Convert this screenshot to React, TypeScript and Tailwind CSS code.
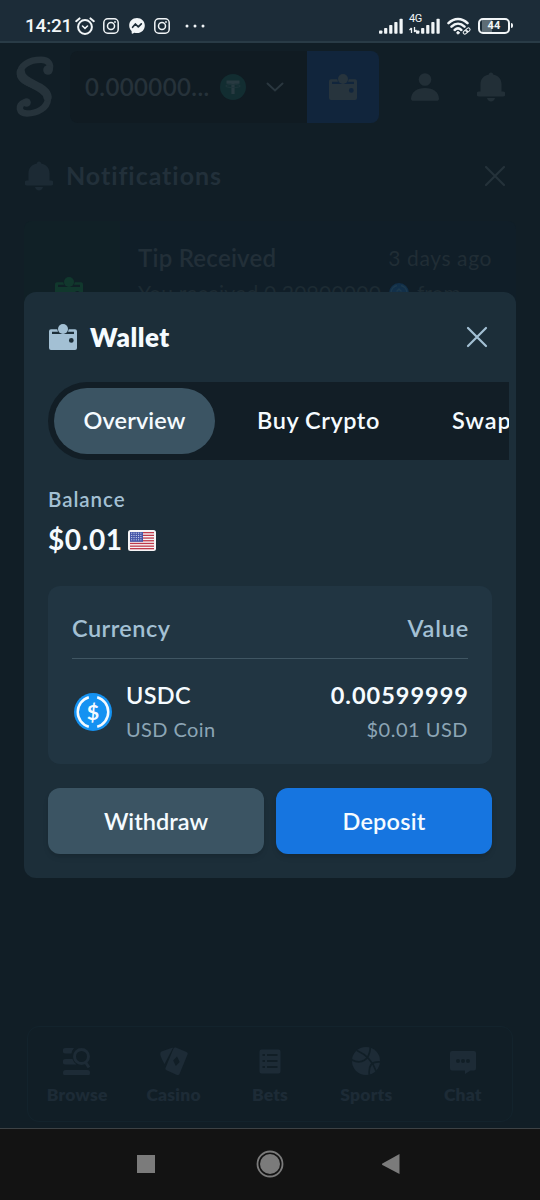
import type { ReactNode } from 'react';

interface IconProps {
  className?: string;
}

function WalletIcon({ className = '' }: IconProps) {
  return (
    <svg viewBox="0 0 28 26" className={className} fill="currentColor" aria-hidden="true">
      <circle cx="14" cy="5" r="5" />
      <path
        fillRule="evenodd"
        d="M2 5.3h6.200l.8 2.400H3V10h22V7.700h-6l.8-2.400H26a2 2 0 0 1 2 2V24a2 2 0 0 1-2 2H2a2 2 0 0 1-2-2V7.300a2 2 0 0 1 2-2zM22.300 14a2.400 2.400 0 1 0 0 4.800a2.400 2.400 0 0 0 0-4.800z"
      />
    </svg>
  );
}

function BellIcon({ className = '' }: IconProps) {
  return (
    <svg viewBox="0 0 28 30" className={className} fill="currentColor" aria-hidden="true">
      <path d="M14 .5c1.300 0 2 .8 2.100 2C21.200 3.400 24.500 7 24.500 12v7.500h1.500a2.300 2.300 0 0 1 0 5H2a2.300 2.300 0 0 1 0-5h1.500V12c0-5 3.300-8.600 8.400-9.500.1-1.200.8-2 2.100-2z" />
      <path d="M10 26h8c-.5 2.200-2 3.500-4 3.500S10.500 28.200 10 26z" />
    </svg>
  );
}

function UserIcon({ className = '' }: IconProps) {
  return (
    <svg viewBox="0 0 28 28" className={className} fill="currentColor" aria-hidden="true">
      <circle cx="14" cy="6.500" r="6.300" />
      <path d="M0 25.500C.5 19 6 15 14 15s13.500 4 14 10.500c0 1.500-1 2.300-2.300 2.300H2.300C1 27.800 0 27 0 25.500z" />
    </svg>
  );
}

function CloseIcon({ className = '' }: IconProps) {
  return (
    <svg viewBox="0 0 22 22" className={className} fill="none" stroke="currentColor" strokeWidth="2.200" strokeLinecap="round" aria-hidden="true">
      <path d="M2 2l18 18M20 2L2 20" />
    </svg>
  );
}

function BrandMark() {
  return (
    <svg viewBox="0 0 40 62" className="h-[62px] w-10 text-[#26333b]" fill="none" stroke="currentColor" strokeLinecap="round" strokeLinejoin="round" aria-hidden="true">
      <path strokeWidth="6.500" d="M34 14.500C37 8 33 3.800 26 3.800C14 3.800 5 9.500 5 18C5 29.500 34 29 33 43C32.300 52 22 57.500 12 57.500C3.500 57.500 2.500 49 9 46.500" />
      <circle cx="33" cy="14" r="4.800" fill="currentColor" stroke="none" />
      <circle cx="11.500" cy="46.500" r="4.300" fill="currentColor" stroke="none" />
      <path strokeWidth="8.500" d="M5.800 16C5.500 28 31.500 29 32.500 41" />
    </svg>
  );
}

function InstagramIcon() {
  return (
    <svg viewBox="0 0 16 16" className="size-4" fill="none" stroke="currentColor" strokeWidth="1.500" aria-hidden="true">
      <rect x=".8" y=".8" width="14.400" height="14.400" rx="4" />
      <circle cx="8" cy="8" r="3.500" />
      <circle cx="12" cy="4" r=".9" fill="currentColor" stroke="none" />
    </svg>
  );
}

function SignalBars({ className = '' }: IconProps) {
  return (
    <svg viewBox="0 0 24 16" className={className} fill="currentColor" aria-hidden="true">
      <rect x="0" y="12.500" width="3.400" height="3.200" rx=".8" />
      <rect x="5.100" y="10" width="3.200" height="5.700" rx=".8" />
      <rect x="10.200" y="7" width="3.200" height="8.700" rx=".8" />
      <rect x="15.300" y="4" width="3.200" height="11.700" rx=".8" />
      <rect x="20.500" y=".7" width="3.200" height="15" rx=".8" />
    </svg>
  );
}

function StatusBar() {
  return (
    <div className="flex h-[43px] shrink-0 items-end justify-between border-b-2 border-[#293b46] bg-[#1c2c38] text-[#f1f5f7]">
      <div className="flex h-[31px] items-center pl-[25px]">
        <span className="w-[50px] whitespace-nowrap font-['Roboto'] text-[19px] font-medium leading-6 tracking-[-0.2px]">14:21</span>
        <svg viewBox="0 0 20 18" className="h-[18px] w-5" fill="none" stroke="currentColor" strokeWidth="2" strokeLinecap="round" aria-hidden="true">
          <circle cx="10" cy="10" r="6.900" />
          <path d="M7.500 9l2.500 2.300L12.500 9" strokeWidth="1.600" />
          <path d="M1.200 4.200L4.500 1.400M18.800 4.200L15.500 1.400" />
        </svg>
        <div className="ml-2">
          <InstagramIcon />
        </div>
        <svg viewBox="0 0 16 16" className="ml-2.5 size-4" aria-hidden="true">
          <path fill="currentColor" d="M8 0C3.500 0 .2 3.200.2 7.500c0 2.300.9 4.200 2.400 5.500l.1 2.300c0 .4.400.6.700.4l2-.9c.8.2 1.700.3 2.600.3 4.500 0 7.800-3.300 7.800-7.600S12.500 0 8 0z" />
          <path fill="none" stroke="#1c2c38" strokeWidth="1.700" strokeLinecap="round" strokeLinejoin="round" d="M3.600 9.300L6.400 6l2.900 2.800 3-2.900" />
        </svg>
        <div className="ml-[9px]">
          <InstagramIcon />
        </div>
        <svg viewBox="0 0 20 4" className="ml-[15px] h-1 w-5" fill="currentColor" aria-hidden="true">
          <circle cx="2" cy="2" r="1.500" />
          <circle cx="10" cy="2" r="1.500" />
          <circle cx="18" cy="2" r="1.500" />
        </svg>
      </div>
      <div className="flex h-[31px] items-center pr-[30px]">
        <SignalBars className="h-4 w-6" />
        <div className="relative ml-1.5 h-4 w-[31px]">
          <span className="absolute -top-1.5 left-0 font-['Roboto'] text-[11px] leading-[13px] tracking-[-0.5px]">4G</span>
          <SignalBars className="absolute right-0 top-0 h-4 w-6" />
          <svg viewBox="0 0 8 6" className="absolute left-0 top-[9px] h-1.5 w-2" stroke="currentColor" fill="none" strokeWidth="1.300" aria-hidden="true">
            <path d="M2.500 6V1M.5 3l2-2M5.500 0v5M7.500 3l-2 2" />
          </svg>
        </div>
        <svg viewBox="0 0 24 18" className="ml-[7px] h-[18px] w-6" fill="none" stroke="currentColor" strokeLinecap="round" aria-hidden="true">
          <path strokeWidth="2.500" d="M1.500 6.200C7 .6 15 .6 20.500 6.200M4.500 9.700c4-3.900 9-3.900 13 0M7.700 13c2-1.900 4.600-1.900 6.600 0" />
          <circle cx="11" cy="15.800" r="1.200" fill="currentColor" />
          <g strokeWidth="1" transform="rotate(-40 19.500 14)">
            <rect x="15.700" y="12.500" width="4.500" height="3.200" rx="1.600" />
            <rect x="19" y="12.500" width="4.500" height="3.200" rx="1.600" />
          </g>
        </svg>
        <div className="ml-[7px] flex h-4 w-8 items-center justify-center rounded-[5px] border-2 border-current bg-[linear-gradient(90deg,transparent_2px,#5d6c75_2px,#5d6c75_12px,transparent_12px)]">
          <span className="font-['Roboto'] text-[11px] font-bold leading-3 tracking-[0.3px]">44</span>
        </div>
        <div className="-mr-[3px] ml-px h-[5px] w-0.5 rounded-r bg-current" />
      </div>
    </div>
  );
}

function SiteHeader() {
  return (
    <header className="flex h-[87px] shrink-0 items-center pl-[15px]">
      <BrandMark />
      <div className="ml-[15px] flex h-[72px] items-center rounded-l-lg bg-[#101b22] pl-[15px]">
        <span className="w-[135px] whitespace-nowrap text-[24px] font-semibold tracking-[0.4px] text-[#26323a]">0.000000...</span>
        <svg viewBox="0 0 26 26" className="size-[26px]" aria-hidden="true">
          <circle cx="13" cy="13" r="13" fill="#122d31" />
          <path d="M6.500 6.500h13v3.200h-4.900V20h-3.200V9.700H6.500z" fill="#283a41" />
          <ellipse cx="13" cy="12" rx="7.500" ry="1.500" fill="none" stroke="#1f353b" />
        </svg>
        <svg viewBox="0 0 18 10" className="ml-5 mr-[23px] h-2.5 w-[18px] text-[#2a373f]" fill="none" stroke="currentColor" strokeWidth="2" strokeLinecap="round" aria-hidden="true">
          <path d="M1.500 1.500L9 8.500l7.500-7" />
        </svg>
      </div>
      <div className="flex h-[72px] w-[72px] items-center justify-center rounded-r-lg bg-[#11253c]">
        <WalletIcon className="h-[26px] w-7 text-[#27343d]" />
      </div>
      <UserIcon className="ml-8 size-7 text-[#222f37]" />
      <BellIcon className="ml-[38px] h-[30px] w-7 text-[#222f37]" />
    </header>
  );
}

function NotificationList() {
  return (
    <section className="flex-1 px-6">
      <div className="flex h-[91px] items-center">
        <BellIcon className="ml-px h-[30px] w-7 text-[#1c2a34]" />
        <h2 className="ml-[13px] text-[25px] font-bold tracking-[0.95px] text-[#22303a]">Notifications</h2>
        <CloseIcon className="ml-auto mr-2.5 size-[22px] text-[#25323a]" />
      </div>
      <div className="flex h-[190px] rounded-lg bg-[#101e28]">
        <div className="w-24 rounded-l-lg bg-[#102026] pl-[31px] pt-14">
          <WalletIcon className="h-[26px] w-7 text-[#11382d]" />
        </div>
        <div className="flex-1 pl-[18px] pr-6 pt-5">
          <div className="flex h-[34px] items-center justify-between">
            <span className="text-[24px] font-semibold tracking-[0.25px] text-[#222f38]">Tip Received</span>
            <span className="text-[21px] tracking-[0.6px] text-[#202d35]">3 days ago</span>
          </div>
          <div className="flex h-9 items-center whitespace-nowrap text-[21px] text-[#1d2b33]">
            <span className="w-[251px] tracking-[0.25px]">You received 0.20900000</span>
            <svg viewBox="0 0 20 20" className="size-5" fill="none" aria-hidden="true">
              <circle cx="10" cy="10" r="10" fill="#12304a" />
              <path d="M8 2.500a7.700 7.700 0 0 0 0 15M12 2.500a7.700 7.700 0 0 1 0 15M7.500 8.500L10 6l2.500 2.500" stroke="#1d3a4e" strokeWidth="1.500" />
            </svg>
            <span className="ml-2">from</span>
          </div>
        </div>
      </div>
    </section>
  );
}

const navItems: { label: string; icon: ReactNode }[] = [
  {
    label: 'Browse',
    icon: (
      <>
        <path d="M2.500 1h8.500a10 10 0 0 0-2.500 5.500H2.500A2.700 2.700 0 0 1 2.500 1zM2.500 12h7a10 10 0 0 0 4 5.500H2.500a2.700 2.700 0 0 1 0-5.500z" />
        <rect y="23" width="27" height="5.500" rx="2.500" />
        <path fill="none" stroke="currentColor" strokeWidth="3" d="M26 20.500l-3-4.500M18.500 2.500a7 7 0 1 0 0 14a7 7 0 0 0 0-14z" />
      </>
    ),
  },
  {
    label: 'Casino',
    icon: (
      <>
        <path d="M1.500 4.500L12 .800q1.500-.5.500 1L4.500 17Q1 11 .3 7.500 0 5.200 1.500 4.500z" />
        <path fillRule="evenodd" d="M15.800.5l10.700 4.400q1.800.8 1 2.500L19.500 27q-.8 1.500-2.500.9L6.500 23.200q-1.700-.9-.9-2.500L13.500 1.500q.8-1.500 2.300-1zM17 9.500l-3.800 4 2.600 5.500 3.900-4z" />
      </>
    ),
  },
  {
    label: 'Bets',
    icon: (
      <path fillRule="evenodd" d="M5.500 2.500h17a2 2 0 0 1 2 2v20a2 2 0 0 1-2 2h-17a2 2 0 0 1-2-2v-20a2 2 0 0 1 2-2zM6.500 7v2H9V7zm4.500 0v2h10.500V7zm-4.500 6v2H9v-2zm4.500 0v2h10.500v-2zm-4.500 6v2H9v-2zm4.500 0v2h10.500v-2z" />
    ),
  },
  {
    label: 'Sports',
    icon: (
      <>
        <circle cx="14" cy="14" r="14" />
        <path fill="none" stroke="#111f27" strokeWidth="1.700" d="M-1 12.500C9 18 18 13.500 18.500-1M5 3.500C15 8 21 15 24 24M29 15C19 14 16 19 17.500 29" />
      </>
    ),
  },
  {
    label: 'Chat',
    icon: (
      <path fillRule="evenodd" d="M3 4h22a2 2 0 0 1 2 2v15.500a2 2 0 0 1-2 2h-3.500L16 27v-3.500H3a2 2 0 0 1-2-2V6a2 2 0 0 1 2-2zM9 12a2 2 0 1 0 0 4a2 2 0 0 0 0-4zm5 0a2 2 0 1 0 0 4a2 2 0 0 0 0-4zm5 0a2 2 0 1 0 0 4a2 2 0 0 0 0-4z" />
    ),
  },
];

function BottomNav() {
  return (
    <nav className="mx-[27px] mb-1.5 flex h-[96px] shrink-0 rounded-xl border border-[#13232c] px-px pt-5">
      {navItems.map((item) => (
        <div key={item.label} className="flex flex-1 flex-col items-center text-[#1d2b36]">
          <svg viewBox="0 0 28 28" className="size-7" fill="currentColor" aria-hidden="true">
            {item.icon}
          </svg>
          <span className="mt-2 text-[17.500px] font-extrabold leading-6 tracking-[0.2px]">{item.label}</span>
        </div>
      ))}
    </nav>
  );
}

function SystemNav() {
  return (
    <div className="flex h-[72px] shrink-0 items-center border-t border-[#3d4245] bg-[#131313] pb-0.5 pl-[137px] text-[#7b7b7b]">
      <div className="size-[18px] bg-current" />
      <svg viewBox="0 0 28 28" className="ml-[101px] size-7" aria-hidden="true">
        <circle cx="14" cy="14" r="12.500" fill="none" stroke="currentColor" strokeWidth="1.800" />
        <circle cx="14" cy="14" r="10" fill="currentColor" />
      </svg>
      <svg viewBox="0 0 18 20" className="ml-[98px] h-5 w-[18px]" fill="currentColor" aria-hidden="true">
        <path d="M17.500 0v20L.4 11q-.8-.9 0-1.600z" />
      </svg>
    </div>
  );
}

function UsFlag() {
  return (
    <svg viewBox="0 0 28 21" className="h-[21px] w-7" aria-hidden="true">
      <rect width="28" height="21" rx="2.500" fill="#f6f4f6" />
      {[2, 4.7, 7.4, 10.1, 12.8, 15.5, 18].map((y) => (
        <rect key={y} x="2" y={y} width="24" height="1.300" fill="#bf3a4b" />
      ))}
      <rect x="2" y="2" width="13" height="9.800" fill="#4656a8" />
      {[3.2, 5.4, 7.6, 9.8].map((y) => (
        <path key={y} d={`M3.200 ${y}h11`} stroke="#dfe3f5" strokeWidth="1" strokeDasharray="1 1.300" />
      ))}
    </svg>
  );
}

function UsdcIcon() {
  return (
    <svg viewBox="0 0 38 38" className="size-[38px]" aria-hidden="true">
      <circle cx="19" cy="19" r="19" fill="#1492f2" />
      <path fill="none" stroke="#f3faff" strokeWidth="2.500" d="M14.800 4.300a15.300 15.300 0 0 0 0 29.400M23.200 4.300a15.300 15.300 0 0 1 0 29.400" />
      <text x="19" y="26.500" textAnchor="middle" fontSize="21.500" fontWeight="700" fill="#f3faff">
        $
      </text>
    </svg>
  );
}

function WalletModal() {
  return (
    <div role="dialog" aria-label="Wallet" className="absolute left-6 top-[292px] h-[586px] w-[492px] rounded-xl bg-[#1c2e39] pl-6 text-[#f5fbff]">
      <div className="flex h-[90px] items-center pr-7">
        <WalletIcon className="ml-px h-[26px] w-7 text-[#a3c0d4]" />
        <h1 className="ml-[13px] text-[26px] font-extrabold tracking-[0.5px]">Wallet</h1>
        <CloseIcon className="ml-auto size-[22px] text-[#a3c0d4]" />
      </div>

      <div className="flex h-[78px] w-[461px] items-center overflow-hidden whitespace-nowrap rounded-l-full bg-[#121e26] pl-1.5 text-[23.500px] font-semibold">
        <button className="h-[66px] w-[161px] shrink-0 rounded-full bg-[#3b5463] tracking-[0.1px]">Overview</button>
        <button className="ml-[42px] w-[124px] shrink-0 text-left tracking-[0.55px]">Buy Crypto</button>
        <button className="ml-[71px] shrink-0 tracking-[0.9px]">Swap</button>
      </div>

      <div className="mr-6">
        <p className="mt-[27px] text-[20.500px] font-semibold leading-6 tracking-[0.95px] text-[#a3c0d4]">Balance</p>
        <div className="mt-[11px] flex h-9 items-center">
          <span className="w-20 whitespace-nowrap pb-0.5 text-[28px] font-bold tracking-[0.6px]">$0.01</span>
          <UsFlag />
        </div>

        <div className="mt-7 h-[178px] rounded-xl bg-[#213542] px-6 pt-[23px]">
          <div className="flex h-[50px] items-start justify-between border-b border-[#405663] text-[23.500px] font-semibold leading-[38px] text-[#a3c0d4]">
            <span className="tracking-[0.45px]">Currency</span>
            <span className="-mr-px tracking-[0.8px]">Value</span>
          </div>
          <div className="flex pt-[19px]">
            <div className="ml-0.5 mt-[15px]">
              <UsdcIcon />
            </div>
            <div className="ml-3.5 flex-1">
              <p className="text-[23.500px] font-semibold leading-[34px] tracking-[0.3px]">USDC</p>
              <p className="text-[20px] leading-[34px] tracking-[0.4px] text-[#8ca5b5]">USD Coin</p>
            </div>
            <div className="text-right">
              <p className="-mr-px text-[23.500px] font-bold leading-[34px] tracking-[1px]">0.00599999</p>
              <p className="text-[20px] leading-[34px] tracking-[0.5px] text-[#8ca5b5]">$0.01 USD</p>
            </div>
          </div>
        </div>

        <div className="mt-6 grid grid-cols-2 gap-3 text-[23.500px] font-semibold">
          <button className="h-[66px] rounded-xl bg-[#3b5463] pt-0.5 shadow-md">Withdraw</button>
          <button className="h-[66px] rounded-xl bg-[#1675e0] pt-0.5 tracking-[0.2px] shadow-md">Deposit</button>
        </div>
      </div>
    </div>
  );
}

export default function App() {
  return (
    <div className="relative flex h-[1200px] w-[540px] flex-col overflow-hidden bg-[#111e26] font-['Lato','Liberation_Sans',sans-serif]">
      <StatusBar />
      <SiteHeader />
      <NotificationList />
      <BottomNav />
      <SystemNav />
      <WalletModal />
    </div>
  );
}
